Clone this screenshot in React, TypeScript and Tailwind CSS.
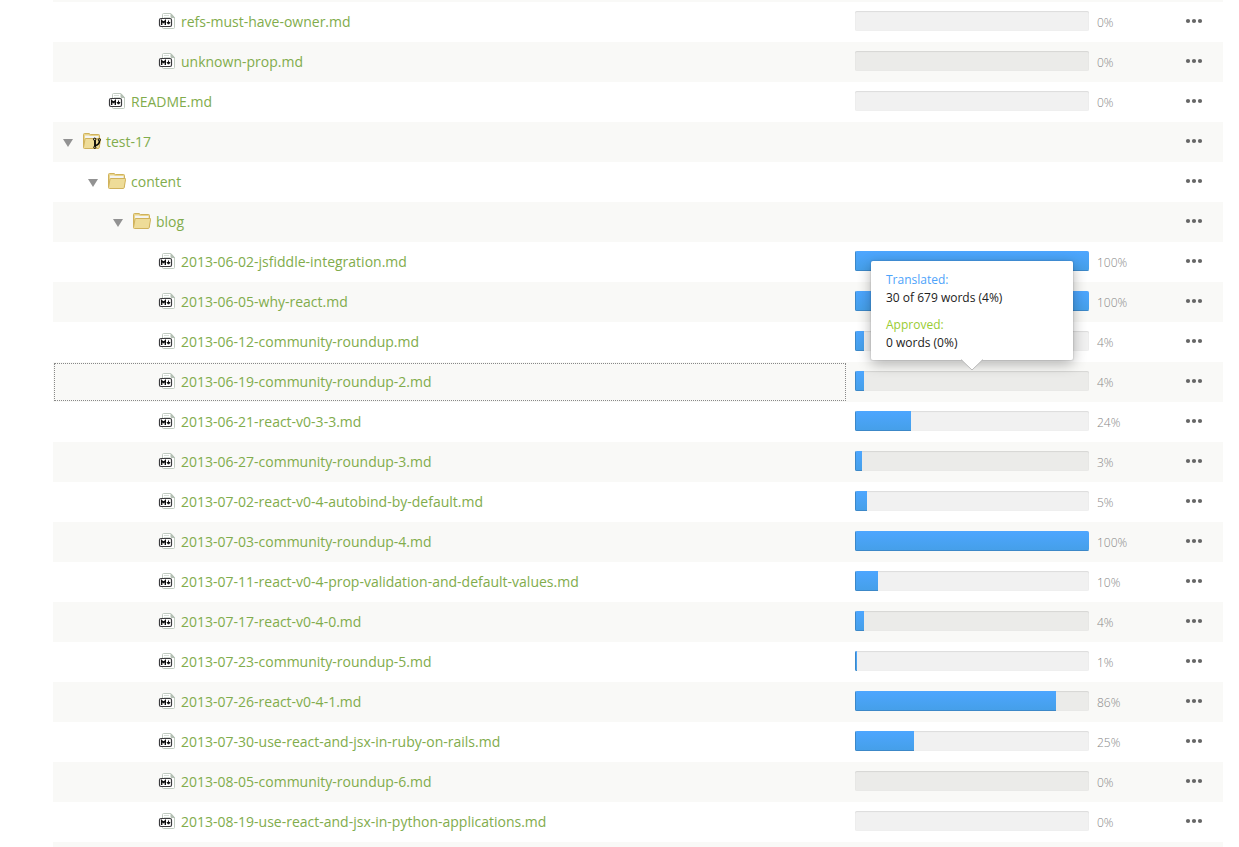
import React from "react";

type Kind = "file" | "branch" | "folder";
type Item = { name: string; kind: Kind; depth: number; done?: number; focused?: boolean };

const items: Item[] = [
  { name: "refs-must-have-owner.md", kind: "file", depth: 3, done: 0 },
  { name: "unknown-prop.md", kind: "file", depth: 3, done: 0 },
  { name: "README.md", kind: "file", depth: 1, done: 0 },
  { name: "test-17", kind: "branch", depth: 0 },
  { name: "content", kind: "folder", depth: 1 },
  { name: "blog", kind: "folder", depth: 2 },
  { name: "2013-06-02-jsfiddle-integration.md", kind: "file", depth: 3, done: 100 },
  { name: "2013-06-05-why-react.md", kind: "file", depth: 3, done: 100 },
  { name: "2013-06-12-community-roundup.md", kind: "file", depth: 3, done: 4 },
  { name: "2013-06-19-community-roundup-2.md", kind: "file", depth: 3, done: 4, focused: true },
  { name: "2013-06-21-react-v0-3-3.md", kind: "file", depth: 3, done: 24 },
  { name: "2013-06-27-community-roundup-3.md", kind: "file", depth: 3, done: 3 },
  { name: "2013-07-02-react-v0-4-autobind-by-default.md", kind: "file", depth: 3, done: 5 },
  { name: "2013-07-03-community-roundup-4.md", kind: "file", depth: 3, done: 100 },
  { name: "2013-07-11-react-v0-4-prop-validation-and-default-values.md", kind: "file", depth: 3, done: 10 },
  { name: "2013-07-17-react-v0-4-0.md", kind: "file", depth: 3, done: 4 },
  { name: "2013-07-23-community-roundup-5.md", kind: "file", depth: 3, done: 1 },
  { name: "2013-07-26-react-v0-4-1.md", kind: "file", depth: 3, done: 86 },
  { name: "2013-07-30-use-react-and-jsx-in-ruby-on-rails.md", kind: "file", depth: 3, done: 25 },
  { name: "2013-08-05-community-roundup-6.md", kind: "file", depth: 3, done: 0 },
  { name: "2013-08-19-use-react-and-jsx-in-python-applications.md", kind: "file", depth: 3, done: 0 },
];

const indent = ["pl-[8px]", "pl-[33px]", "pl-[58px]", "pl-[83px]"];

function MarkdownIcon() {
  return (
    <svg width="18" height="16" viewBox="0 0 18 16" aria-hidden="true" className="mb-0.5 shrink-0">
      <path d="M4.500 5V1.500a1 1 0 0 1 1-1H13l3.500 4v10a1 1 0 0 1-1 1h-10a1 1 0 0 1-1-1V13" fill="#fff" stroke="#c0cbc0" />
      <path d="M13 1v3.500h3.500z" fill="#b4c0b4" stroke="#b4c0b4" />
      <path d="M6 2.500h5M6 4.500h6" stroke="#d5ddd5" />
      <rect x="1.500" y="5.500" width="12" height="8" rx="1.500" fill="#fff" stroke="#3a3a3d" strokeWidth="1.200" />
      <path d="M3.700 12V7.800l1.800 1.800 1.800-1.800V12" fill="none" stroke="#111" strokeWidth="1.400" />
      <path d="M10.500 7.500V11M9 9.500h3L10.500 11.200z" fill="#111" stroke="#111" />
    </svg>
  );
}

function FolderIcon({ branch = false }: { branch?: boolean }) {
  return (
    <svg width="18" height="16" viewBox="0 0 18 16" aria-hidden="true" className="mb-0.5 shrink-0">
      <path d="M.5 14V1.500a1 1 0 0 1 1-1H6l1.500 1h8a1 1 0 0 1 1 1V14z" fill="#e9d58c" stroke="#d0b25c" />
      <path d="M2 2.500h4l1 .5h8.500v2.500H2z" fill="#f4f4f2" />
      <path d="M2.800 5.500h14.200a.6.6 0 0 1 .6.7l-1.400 8.500a1 1 0 0 1-1 .8H1.500a1 1 0 0 1-1-1.100L2 6.200a.8.8 0 0 1 .8-.7z" fill="#eedc98" stroke="#d0b25c" />
      {branch && (
        <g fill="none" stroke="#000">
          <path d="M12 7v7" strokeWidth="1.800" />
          <path d="M12.500 12.500c2.500-.5 4-1.500 4-5" strokeWidth="1.500" />
          <circle cx="11.700" cy="6.300" r="1.200" fill="#eedc98" />
          <circle cx="11.800" cy="14.300" r="1.100" fill="#eedc98" />
          <circle cx="16.300" cy="6.800" r="1.100" fill="#eedc98" />
        </g>
      )}
    </svg>
  );
}

function Tooltip() {
  return (
    <div
      role="tooltip"
      className="absolute inset-x-4 bottom-full z-10 mb-[11px] rounded-xs bg-white px-[15px] pt-2.5 pb-2 text-xs leading-[18px] text-[#222] shadow-[0_0_1px_1px_rgba(0,0,0,0.08),0_4px_14px_rgba(0,0,0,0.3)]"
    >
      <p className="text-[#4da3fa]">Translated:</p>
      <p>30 of 679 words (4%)</p>
      <p className="mt-[9px] text-[#99cc33]">Approved:</p>
      <p>0 words (0%)</p>
      <svg width="22" height="12" viewBox="0 0 22 12" aria-hidden="true" className="absolute top-full left-1/2 -mt-px -translate-x-1/2">
        <path d="M0 0h22L11 11z" fill="#fff" />
        <path d="M0 .5l11 10.500L22 .5" fill="none" stroke="#bbb" />
      </svg>
    </div>
  );
}

function Progress({ item }: { item: Item }) {
  const done = item.done ?? 0;
  return (
    <div className="relative">
      <div
        role="progressbar"
        aria-label={item.name}
        aria-valuenow={done}
        className="h-5 overflow-hidden rounded-xs bg-black/[0.055] shadow-[inset_0_1px_1px_rgba(0,0,0,0.08),inset_0_0_1px_rgba(0,0,0,0.08)]"
      >
        <div
          className="h-full bg-linear-to-b from-[#4da6ff] to-[#459fe8] shadow-[inset_1px_-1px_0_#3c88c8]"
          style={{ width: `${done}%` }}
        />
      </div>
      {item.focused && <Tooltip />}
    </div>
  );
}

function Row({ item }: { item: Item }) {
  return (
    <tr className="h-10 even:bg-[#f9f9f7]">
      <td className="p-0">
        <div
          className={`m-px flex h-[38px] items-center border border-dotted ${indent[item.depth]} ${item.focused ? "border-[#888]" : "border-transparent"}`}
        >
          {item.kind === "file" ? (
            <span className="w-5" />
          ) : (
            <button type="button" aria-label={`Collapse ${item.name}`} className="w-5">
              <svg width="10" height="8" viewBox="0 0 10 8" aria-hidden="true" className="mt-0.5">
                <path d="M0 0h10L5 8z" fill="#929292" />
              </svg>
            </button>
          )}
          {item.kind === "file" ? <MarkdownIcon /> : <FolderIcon branch={item.kind === "branch"} />}
          <a href="#" className="ml-[5px] text-sm whitespace-nowrap text-[#81ac4c]">
            {item.name}
          </a>
        </div>
      </td>
      <td className="pt-0 pb-0.5 pl-2">{item.done !== undefined && <Progress item={item} />}</td>
      <td className="p-0 pl-2 text-xs font-light text-[#888]">
        {item.done !== undefined && <span className="block pt-0.5">{item.done}%</span>}
      </td>
      <td className="pt-0 pr-5 pb-0.5">
        <button type="button" aria-label={`Actions for ${item.name}`} className="ml-auto block">
          <svg width="18" height="6" viewBox="0 0 18 6" aria-hidden="true" className="block" fill="#666">
            <circle cx="3" cy="3" r="2.100" />
            <circle cx="9" cy="3" r="2.100" />
            <circle cx="15" cy="3" r="2.100" />
          </svg>
        </button>
      </td>
    </tr>
  );
}

export default function App() {
  return (
    <main className="bg-white pr-4 pl-[53px] font-['Open_Sans','Noto_Sans',sans-serif]">
      <div className="border-t-2 border-b-[5px] border-[#f9f9f7]">
        <table className="w-full table-fixed border-collapse">
          <colgroup>
            <col />
            <col className="w-[242px]" />
            <col className="w-[60px]" />
            <col className="w-[74px]" />
          </colgroup>
          <tbody>
            {items.map((item) => (
              <Row key={item.name} item={item} />
            ))}
          </tbody>
        </table>
      </div>
    </main>
  );
}
